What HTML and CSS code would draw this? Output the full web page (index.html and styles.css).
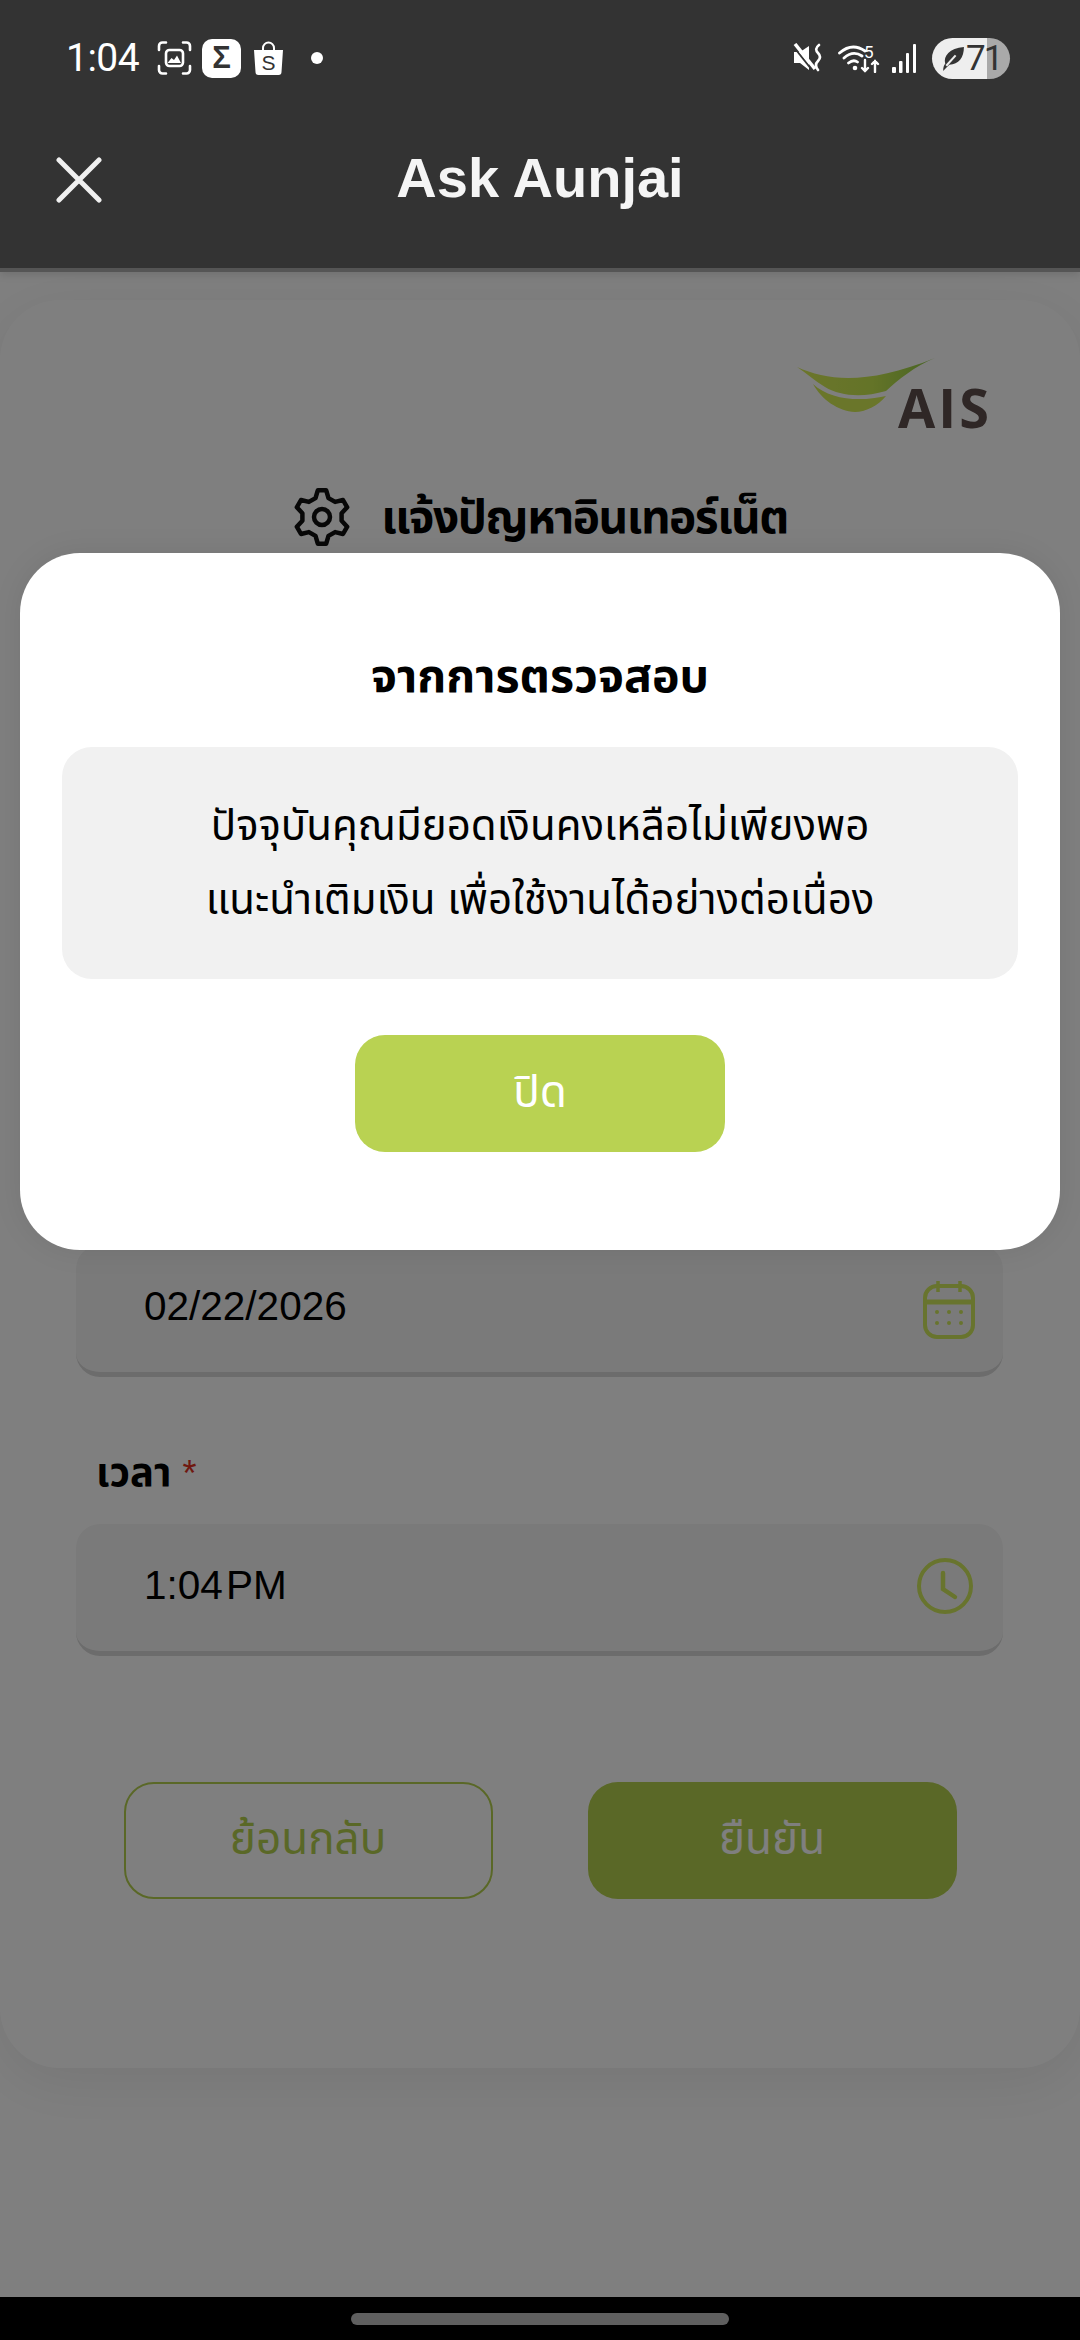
FILE: index.html
```html
<!DOCTYPE html>
<html lang="th">
<head>
<meta charset="utf-8">
<title>Ask Aunjai</title>
<link rel="stylesheet" href="styles.css">
</head>
<body>
<div class="screen">
  <header class="topbar">
    <div class="status">
      <div class="status-left">
        <span class="clock">1:04</span>
        <svg class="ic-shot" viewBox="0 0 35 34" fill="none" stroke="#fff" stroke-width="2.6" stroke-linecap="round"><path d="M2 9V5a3.500 3.500 0 0 1 3.500-3.500H9M26 1.500h3.500A3.500 3.500 0 0 1 33 5v4M33 25v4a3.500 3.500 0 0 1-3.500 3.500H26M9 32.500H5.500A3.500 3.500 0 0 1 2 29v-4"/><rect x="9" y="9" width="17" height="16" rx="3.500" fill="#333"/><path d="M10.500 22l4-5 2.500 2 3-4.500 4 7.500z" fill="#fff" stroke="none"/></svg>
        <span class="sigma">Σ</span>
        <svg class="ic-bag" viewBox="0 0 31 34"><path d="M10 9V7a5.500 5.500 0 0 1 11 0v2" fill="none" stroke="#fff" stroke-width="2"/><path d="M1 9h29l-1.500 22a3 3 0 0 1-3 3h-20a3 3 0 0 1-3-3z" fill="#fff"/><text x="15.500" y="29" text-anchor="middle" class="bag-s">S</text></svg>
        <span class="dot"></span>
      </div>
      <div class="status-right">
        <svg class="ic-mute" viewBox="0 0 30 30" fill="#fff"><path d="M1 9h6l9-6v24L7 20H1z"/><path d="M0 3l19 24" stroke="#333" stroke-width="2"/><path d="M2 1l20 25" stroke="#fff" stroke-width="3.500"/><path d="M26 2q-5 4-1 8t0 8 0 9" fill="none" stroke="#fff" stroke-width="2.600" stroke-linecap="round"/></svg>
        <svg class="ic-wifi" viewBox="0 0 44 30" fill="none" stroke="#fff" stroke-linecap="round"><path d="M1.500 10Q14 -1 27 8M6 15q9-8 18-2M10.500 20q5-4 9-1" stroke-width="2.800"/><circle cx="17" cy="25" r="2.300" fill="#fff" stroke="none"/><text x="26" y="15" class="wifi-5">5</text><path d="M27 17v11M24 25l3 3 3-3M37 29V18M34 21l3-3 3 3" stroke-width="2.400"/></svg>
        <svg class="ic-signal" viewBox="0 0 25 29" fill="#fff"><rect x="0" y="23" width="4" height="6" rx="1"/><rect x="7" y="17" width="3.500" height="12" rx="1"/><rect x="14" y="9" width="3" height="20" rx="1"/><rect x="21" y="0" width="3" height="29" rx="1"/></svg>
        <div class="battery">
          <svg class="ic-leaf" viewBox="0 0 24 26"><path d="M3 25c0-4 1-6 2-7C3 11 9 3 23 2c0 10-5 17-14 17l-3 3z" fill="#333"/><path d="M6 20l9-10" stroke="#eee" stroke-width="2"/></svg>
          <span class="batt-num">71</span>
        </div>
      </div>
    </div>
    <div class="navbar">
      <svg class="ic-close" viewBox="0 0 46 46" fill="none" stroke="#f0f0f0" stroke-width="5" stroke-linecap="round"><path d="M3 3l40 40M43 3L3 43"/></svg>
      <h1 class="nav-title">Ask Aunjai</h1>
    </div>
  </header>

  <main class="content">
    <section class="card">
      <div class="logo-row">
        <svg class="logo" viewBox="0 0 240 110">
          <defs>
            <linearGradient id="leafA" x1="0" x2="1" y1="0" y2="0"><stop offset="0" stop-color="#d8ec58"/><stop offset=".55" stop-color="#c8e850"/><stop offset="1" stop-color="#8ec848"/></linearGradient>
          </defs>
          <path d="M27 27C60 42 100 44 165 18 145 26 128 40 116 51 92 58 70 56 55 47 45 41 36 33 27 27z" fill="url(#leafA)"/>
          <path d="M43 44C60 60 90 62 116 56 108 66 95 72 85 72 68 71 52 60 43 44z" fill="#d4ec54"/>
          <text x="128" y="88" class="logo-text">AIS</text>
        </svg>
      </div>
      <div class="page-title">
        <svg class="ic-gear" viewBox="0 0 60 60" fill="none" stroke="#111" stroke-width="4.500" stroke-linejoin="round"><path d="M23.500 11.100L25.800 3.300H34.200L36.500 11.100L43.100 14.900L51 13L55.200 20.300L49.600 26.200V33.800L55.200 39.700L51 47L43.100 45.100L36.500 48.900L34.200 56.700H25.800L23.500 48.900L16.900 45.100L9 47L4.800 39.700L10.400 33.800V26.200L4.800 20.300L9 13L16.900 14.900Z"/><circle cx="30" cy="30" r="8"/></svg>
        <h2 class="page-heading">แจ้งปัญหาอินเทอร์เน็ต</h2>
      </div>
      <div class="form">
        <div class="field field-date">
          <span class="field-value">02/22/2026</span>
          <svg class="ic-cal" viewBox="0 0 52 58" fill="none" stroke="#d0e85c" stroke-width="4"><rect x="2" y="5" width="48" height="51" rx="12"/><path d="M2 21h48" stroke-width="5"/><path d="M15 0v11M37 0v11" stroke-width="3.500"/><g fill="#d0e85c" stroke="none"><circle cx="14" cy="31" r="2"/><circle cx="26" cy="31" r="2"/><circle cx="38" cy="31" r="2"/><circle cx="14" cy="42" r="2"/><circle cx="26" cy="42" r="2"/><circle cx="38" cy="42" r="2"/></g></svg>
        </div>
        <label class="field-label">เวลา <span class="req">*</span></label>
        <div class="field">
          <span class="field-value time-value">1:04 PM</span>
          <svg class="ic-time" viewBox="0 0 58 58" fill="none" stroke="#d0e85c" stroke-width="4" stroke-linecap="round"><circle cx="29" cy="29" r="26"/><path d="M27 16v16l12 8" stroke-width="4.500"/></svg>
        </div>
      </div>
      <div class="actions">
        <button class="btn btn-outline">ย้อนกลับ</button>
        <button class="btn btn-solid">ยืนยัน</button>
      </div>
    </section>
  </main>

  <footer class="gesture"><span class="gesture-pill"></span></footer>

  <div class="scrim">
    <div class="modal">
      <h3 class="modal-title">จากการตรวจสอบ</h3>
      <div class="modal-box">
        <p class="modal-line">ปัจจุบันคุณมียอดเงินคงเหลือไม่เพียงพอ</p>
        <p class="modal-line">แนะนำเติมเงิน เพื่อใช้งานได้อย่างต่อเนื่อง</p>
      </div>
      <button class="btn btn-close">ปิด</button>
    </div>
  </div>
</div>
</body>
</html>
```
FILE: styles.css
```css
* { box-sizing: border-box; }
html, body { margin: 0; padding: 0; }
body { font-family: "Liberation Sans", "Noto Sans Thai", "Noto Sans", sans-serif; background: #000; }
h1, h2, h3, p { margin: 0; }

.screen {
  position: relative;
  width: 1080px;
  height: 2340px;
  display: flex;
  flex-direction: column;
  background: #fff;
  overflow: hidden;
}

.topbar {
  position: relative;
  z-index: 3;
  height: 272px;
  padding-bottom: 28px;
  background: #333;
  border-bottom: 4px solid #555;
  box-shadow: 0 3px 8px rgba(0, 0, 0, .12);
}
.status {
  height: 116px;
  padding: 0 70px 0 66px;
  display: flex;
  align-items: center;
  justify-content: space-between;
}
.status-left { display: flex; align-items: center; }
.status-right { display: flex; align-items: center; }
.clock { font-family: Roboto, sans-serif; font-size: 39px; color: #fff; width: 72px; margin-right: 19px; white-space: nowrap; letter-spacing: -.5px; }
.ic-shot { width: 35px; height: 34px; margin-right: 10px; }
.sigma {
  width: 39px; height: 39px; margin-right: 12px;
  display: flex; align-items: center; justify-content: center;
  background: #fff; border-radius: 10px;
  color: #333; font-size: 31px; font-weight: 700;
}
.ic-bag { width: 31px; height: 34px; margin-right: 27px; }
.bag-s { font-family: "Liberation Sans", sans-serif; font-size: 21px; fill: #333; }
.dot { width: 12px; height: 12px; border-radius: 50%; background: #fff; }
.ic-mute { width: 30px; height: 30px; margin-right: 15px; }
.ic-wifi { width: 44px; height: 30px; margin-right: 10px; }
.wifi-5 { font-family: Roboto, sans-serif; font-size: 17px; fill: #fff; stroke: none; }
.ic-signal { width: 25px; height: 29px; margin-right: 15px; }
.battery {
  width: 78px; height: 41px; padding-left: 8px;
  display: flex; align-items: center;
  border-radius: 21px;
  background: linear-gradient(90deg, #eee 70.500%, #a9a9a9 70.500%);
}
.ic-leaf { width: 25px; height: 27px; margin-right: 1px; }
.batt-num { font-family: Roboto, sans-serif; font-size: 35px; letter-spacing: -2px; color: #333; line-height: 1; }

.navbar {
  height: 124px;
  padding: 0 56px;
  display: grid;
  grid-template-columns: 1fr auto 1fr;
  align-items: center;
}
.ic-close { width: 46px; height: 46px; margin-top: 4px; }
.nav-title { font-size: 56px; font-weight: 700; color: #f5f5f5; line-height: 1; grid-column: 2; }

.content { flex: 1; padding-top: 28px; }
.card {
  height: 1768px;
  padding-top: 40px;
  background: #fff;
  border-radius: 60px;
  box-shadow: 0 14px 60px rgba(0, 0, 0, .08);
}
.logo-row { display: flex; justify-content: flex-end; padding-right: 70px; }
.logo { width: 240px; height: 110px; display: block; }
.logo-text { font-family: "Open Sans", sans-serif; font-size: 54px; font-weight: 700; letter-spacing: 3px; fill: #5e4f4d; }

.page-title {
  margin-top: 37px;
  height: 60px;
  display: flex;
  align-items: center;
  justify-content: center;
  gap: 29px;
}
.ic-gear { width: 60px; height: 60px; }
.page-heading { font-size: 46px; font-weight: 700; letter-spacing: -1.500px; color: #000; line-height: 60px; }

.form { margin-top: 698px; padding: 0 77px 0 76px; }
.field {
  height: 132px;
  padding: 0 20px 4px 68px;
  display: flex;
  align-items: center;
  justify-content: space-between;
  background: #f5f5f5;
  border-radius: 24px;
  border-bottom: 5px solid #d8d8d8;
}
.field-value { font-size: 40.500px; color: #000; }
.time-value { word-spacing: -8px; }
.ic-cal { width: 52px; height: 58px; margin: 6px 8px 0 0; }
.ic-time { width: 58px; height: 58px; margin-right: 9px; }
.field-label {
  display: block;
  margin: 73px 0 30px 20px;
  height: 44px;
  line-height: 44px;
  font-size: 40px;
  font-weight: 700;
  color: #000;
}
.req { color: #e0301e; font-weight: 400; font-size: 36px; }

.actions { margin-top: 126px; display: flex; justify-content: center; gap: 95px; }
.btn {
  width: 369px;
  height: 117px;
  border-radius: 30px;
  font-family: inherit;
  font-size: 44px;
  display: flex;
  align-items: center;
  justify-content: center;
}
.btn-outline { background: #fff; border: 2px solid #b5d04f; color: #b5d04f; }
.btn-solid { background: #b5d04f; border: 0; color: #fff; }

.gesture {
  position: relative;
  z-index: 3;
  height: 43px;
  display: flex;
  justify-content: center;
  padding-top: 16px;
  background: #000;
}
.gesture-pill { width: 378px; height: 12px; border-radius: 6px; background: #5f5f5f; }

.scrim {
  position: absolute;
  z-index: 2;
  top: 272px;
  left: 0;
  right: 0;
  bottom: 43px;
  padding-top: 281px;
  display: flex;
  justify-content: center;
  align-items: flex-start;
  background: rgba(0, 0, 0, .5);
}
.modal {
  width: 1040px;
  height: 697px;
  padding: 93px 42px 0;
  display: flex;
  flex-direction: column;
  align-items: center;
  background: #fff;
  border-radius: 60px;
  box-shadow: 0 0 30px rgba(0, 0, 0, .08);
}
.modal-title { height: 60px; line-height: 60px; font-size: 46.500px; font-weight: 700; color: #000; }
.modal-box {
  width: 956px;
  height: 232px;
  margin: 41px 0 56px;
  display: flex;
  flex-direction: column;
  align-items: center;
  justify-content: center;
  background: #f1f1f1;
  border-radius: 30px;
}
.modal-line { font-size: 42px; line-height: 74px; color: #000; }
.btn-close { background: #b9d252; border: 0; color: #fff; width: 370px; }
```
